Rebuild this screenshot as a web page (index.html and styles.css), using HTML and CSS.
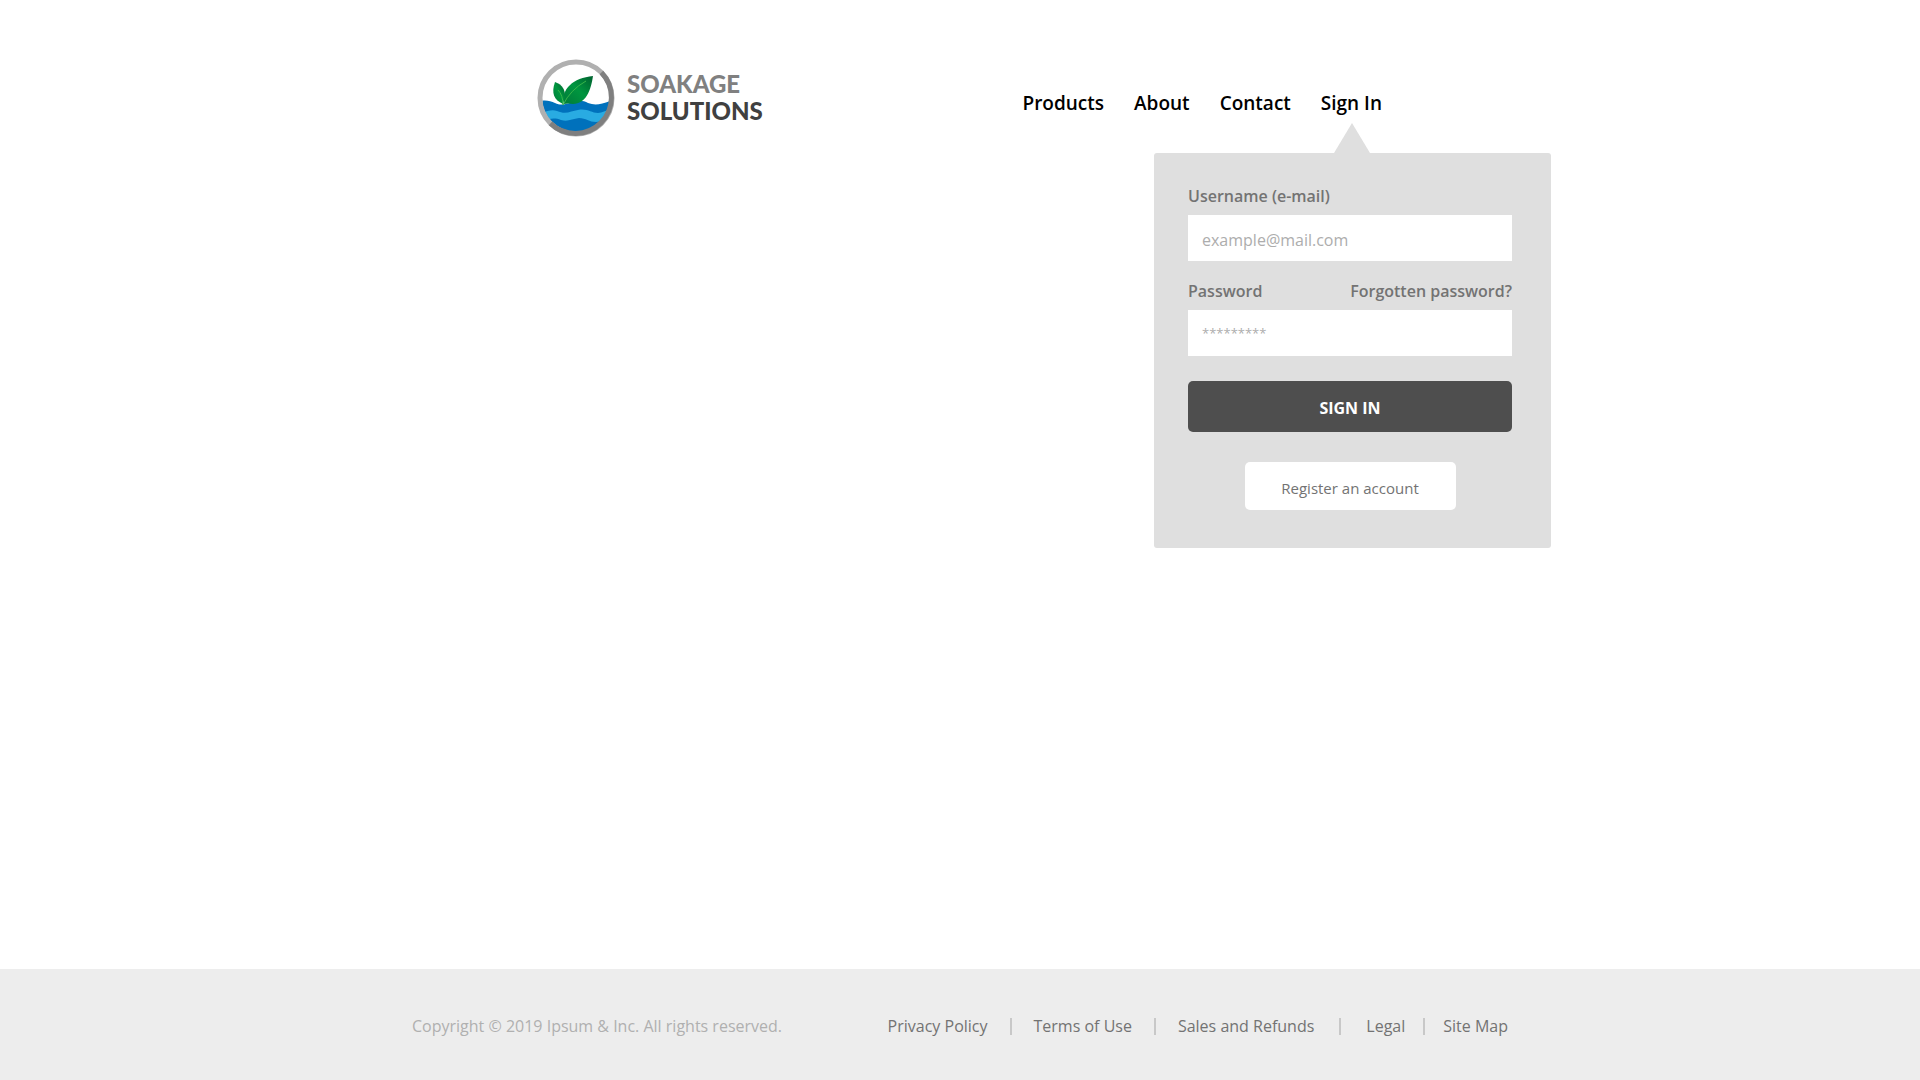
FILE: index.html
```html
<!DOCTYPE html>
<html lang="en">
<head>
<meta charset="utf-8">
<meta name="viewport" content="width=device-width, initial-scale=1">
<title>Soakage Solutions</title>
<link rel="stylesheet" href="styles.css">
</head>
<body>
<header class="site-header">
  <div class="container header-row">
    <a class="brand" href="#">
      <svg class="brand-mark" viewBox="0 0 78 78" aria-hidden="true">
        <defs>
          <clipPath id="disc"><circle cx="39" cy="39" r="34"/></clipPath>
          <linearGradient id="leaf" x1="0" y1="1" x2="1" y2="0">
            <stop offset="0" stop-color="#007a3a"/>
            <stop offset="0.5" stop-color="#00963f"/>
            <stop offset="1" stop-color="#00622f"/>
          </linearGradient>
        </defs>
        <circle cx="39" cy="39" r="36" fill="#fff"/>
        <g clip-path="url(#disc)">
          <path fill="#0071bc" d="M0 43 C8 40 13 42 18 44 C24 47 28 45 33 44 C40 41 46 41 51 44 C59 47 66 45 78 40 V78 H0 Z"/>
          <path fill="#29abe2" d="M0 55 C8 53 14 50 20 52 C29 56 34 52 41 51 C50 49 54 54 61 54 C67 53 70 51 78 49 V59 C70 59 66 63 59 63 C52 63 49 59 42 59 C35 60 31 63 24 61 C16 58 11 60 0 65 Z"/>
        </g>
        <path fill="url(#leaf)" d="M27 45 C24 30 36 19 56 17 C54 31 49 45 36 45 Q31 44 27 45 Z"/>
        <path fill="url(#leaf)" d="M26 45 C17 41 14 34 18 23 C26 26 28 31 28 37 Z"/>
        <path fill="none" stroke="#39b54a" stroke-width="1" d="M26 46 Q33 31 49 22 M26 46 Q26 36 21 31"/>
        <circle cx="39" cy="39" r="36" fill="none" stroke="#b0b0b0" stroke-width="5"/>
        <path fill="none" stroke="#7f7f7f" stroke-width="5" d="M64.400 13.500 A36 36 0 0 1 13.500 64.400"/>
      </svg>
      <span class="brand-name"><span class="brand-top">SOAKAGE</span><span class="brand-bottom">SOLUTIONS</span></span>
    </a>
    <nav class="main-nav" aria-label="Main">
      <a href="#">Products</a>
      <a href="#">About</a>
      <a href="#">Contact</a>
      <div class="account">
        <a href="#sign-in">Sign In</a>
        <form class="sign-in" id="sign-in">
          <div class="label-row"><label for="email">Username (e-mail)</label></div>
          <input class="field" id="email" type="email" placeholder="example@mail.com">
          <div class="label-row"><label for="password">Password</label><a href="#">Forgotten password?</a></div>
          <input class="field field-password" id="password" type="password" placeholder="*********">
          <button class="submit" type="submit">SIGN IN</button>
          <button class="register" type="button">Register an account</button>
        </form>
      </div>
    </nav>
  </div>
</header>
<main class="content"></main>
<footer class="site-footer">
  <div class="container footer-row">
    <p class="copyright">Copyright © 2019 Ipsum &amp; Inc. All rights reserved.</p>
    <nav class="footer-nav" aria-label="Footer">
      <a href="#">Privacy Policy</a>
      <span class="separator"></span>
      <a href="#">Terms of Use</a>
      <span class="separator"></span>
      <a href="#">Sales and Refunds</a>
      <span class="separator separator-wide"></span>
      <a href="#">Legal</a>
      <span class="separator separator-tight"></span>
      <a href="#">Site Map</a>
    </nav>
  </div>
</footer>
</body>
</html>
```
FILE: styles.css
```css
* { box-sizing: border-box; }

body {
  display: flex;
  flex-direction: column;
  min-height: 100vh;
  margin: 0;
  background: #fff;
  font-family: "Segoe UI", "Open Sans", "Noto Sans", sans-serif;
  font-size: 16px;
  line-height: 24px;
  color: #737373;
}

a { color: inherit; text-decoration: none; }

.container {
  width: 100%;
  max-width: 1096px;
  margin: 0 auto;
}

.header-row {
  display: flex;
  justify-content: space-between;
  padding: 59px 126px 0 125px;
}

.brand { display: flex; align-items: center; gap: 12px; }
.brand-mark { width: 78px; height: 78px; }

.brand-name {
  display: flex;
  flex-direction: column;
  padding-bottom: 2px;
  font-family: Lato, sans-serif;
  font-size: 24px;
  font-weight: 900;
  line-height: 27px;
}
.brand-top { color: #808080; }
.brand-bottom { color: #404040; }

.main-nav {
  display: flex;
  align-items: center;
  gap: 30px;
  padding-top: 10px;
  color: #000;
  font-size: 19px;
  font-weight: 600;
}

.account { position: relative; }

.sign-in {
  position: absolute;
  z-index: 1;
  top: 62px;
  right: -169px;
  display: flex;
  flex-direction: column;
  width: 397px;
  padding: 31px 39px 38px 34px;
  border-radius: 3px;
  background: #dfdfdf;
  color: #737373;
  font-size: 16px;
  font-weight: 400;
}
.sign-in::before {
  content: "";
  position: absolute;
  bottom: 100%;
  left: 180px;
  width: 36px;
  height: 30px;
  background: #dfdfdf;
  clip-path: polygon(50% 0, 100% 100%, 0 100%);
}

.label-row {
  display: flex;
  justify-content: space-between;
  margin-bottom: 7px;
  font-weight: 600;
}

.field {
  height: 46px;
  margin: 0 0 18px;
  padding: 4px 14px 0;
  border: 0;
  background: #fff;
  color: #737373;
  font: inherit;
}
.field-password {
  margin-bottom: 25px;
  padding-top: 0;
  font-size: 13px;
}
.field::placeholder { color: #adadad; opacity: 1; }

button {
  border: 0;
  border-radius: 5px;
  font: inherit;
}
.submit {
  height: 51px;
  margin-bottom: 30px;
  padding: 3px 0 0;
  background: #4e4e4e;
  color: #fff;
  font-weight: 700;
}
.register {
  align-self: center;
  width: 211px;
  height: 48px;
  padding: 3px 0 0;
  background: #fff;
  color: #737373;
  font-size: 15px;
}

.content { flex: 1; }

.site-footer {
  padding: 45px 0 42px;
  background: #ededed;
}
.footer-row {
  display: flex;
  justify-content: space-between;
  align-items: center;
}
.copyright { margin: 0; color: #b0b0b0; }
.footer-nav { display: flex; align-items: center; }
.separator {
  width: 2px;
  height: 17px;
  margin: 0 22px;
  background: #c8c8c8;
}
.separator-wide { margin: 0 25px; }
.separator-tight { margin: 0 18px; }
```
